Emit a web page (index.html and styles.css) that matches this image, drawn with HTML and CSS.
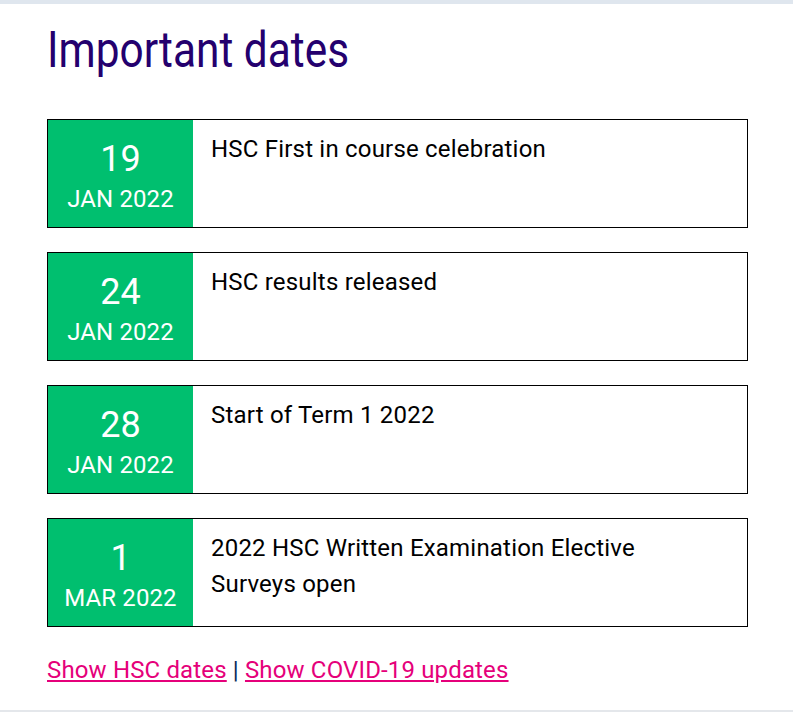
FILE: index.html
```html
<!DOCTYPE html>
<html lang="en">
  <head>
    <meta charset="UTF-8" />
    <meta name="viewport" content="width=device-width, initial-scale=1.0" />
    <title>Important dates</title>
    <link rel="stylesheet" href="styles.css">
  </head>
  <body>
    <div class="container">
      <h2 class="title">Important dates</h2>
      <ul class="dates">
        <li class="date-card">
          <div class="date-box">
            <span class="day">19</span>
            <span class="month">JAN 2022</span>
          </div>
          <p class="event">HSC First in course celebration</p>
        </li>
        <li class="date-card">
          <div class="date-box">
            <span class="day">24</span>
            <span class="month">JAN 2022</span>
          </div>
          <p class="event">HSC results released</p>
        </li>
        <li class="date-card">
          <div class="date-box">
            <span class="day">28</span>
            <span class="month">JAN 2022</span>
          </div>
          <p class="event">Start of Term 1 2022</p>
        </li>
        <li class="date-card">
          <div class="date-box">
            <span class="day">1</span>
            <span class="month">MAR 2022</span>
          </div>
          <p class="event">2022 HSC Written Examination Elective Surveys open</p>
        </li>
      </ul>
      <p class="links">
        <a href="#">Show HSC dates</a> | <a href="#">Show COVID-19 updates</a>
      </p>
    </div>
  </body>
</html>
```

FILE: styles.css
```css
* {
  margin: 0;
  padding: 0;
  box-sizing: border-box;
}

body {
  font-family: Roboto, "Liberation Sans", sans-serif;
  background: #fff;
  color: #000;
  border-top: 4px solid #dfe6ee;
  border-bottom: 2px solid #e4e7eb;
  min-height: 712px;
}

.container {
  padding: 18px 45px 0 47px;
}

.title {
  font-weight: 400;
  font-size: 50px;
  line-height: 56px;
  color: #24006e;
  display: inline-block;
  transform: scaleX(0.848);
  transform-origin: left center;
}

.dates {
  list-style: none;
  margin-top: 41px;
  display: flex;
  flex-direction: column;
  gap: 24px;
}

.date-card {
  display: flex;
  height: 109px;
  border: 1px solid #000;
}

.date-box {
  width: 145px;
  flex-shrink: 0;
  background: #00bf6f;
  color: #fff;
  display: flex;
  flex-direction: column;
  align-items: center;
  padding-top: 17px;
}

.day {
  font-size: 36px;
  line-height: 44px;
}

.month {
  font-size: 24px;
  line-height: 36px;
  letter-spacing: 0.1px;
}

.event {
  font-size: 24px;
  line-height: 36px;
  letter-spacing: 0.2px;
  padding: 11px 100px 0 18px;
}

.links {
  margin-top: 28px;
  font-size: 24px;
  line-height: 30px;
  letter-spacing: 0.15px;
  color: #0a2a5a;
}

.links a {
  color: #e5007a;
}
```
